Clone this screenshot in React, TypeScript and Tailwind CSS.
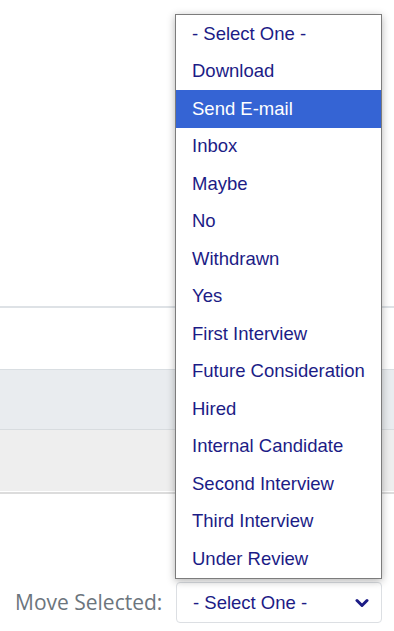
import React from "react";

const items = [
  "- Select One -",
  "Download",
  "Send E-mail",
  "Inbox",
  "Maybe",
  "No",
  "Withdrawn",
  "Yes",
  "First Interview",
  "Future Consideration",
  "Hired",
  "Internal Candidate",
  "Second Interview",
  "Third Interview",
  "Under Review",
];

export default function App() {
  return (
    <div className="relative w-[394px] h-[631px] bg-white overflow-hidden">
      <div className="h-[306px]" />
      <div className="flex flex-col">
        <div className="h-[2px] bg-[#dee2e6]" />
        <div className="h-[61px] bg-white" />
        <div className="h-[1px] bg-[#d9dee2]" />
        <div className="h-[59px] bg-[#e9ecef]" />
        <div className="h-[1px] bg-[#d8dcdf]" />
        <div className="h-[61px] bg-[#eeeeee]" />
        <div className="h-[1px] bg-white" />
        <div className="h-[2px] bg-[#dcdcdc]" />
      </div>
      <div className="mt-[88px] flex items-center pl-[15px]">
        <span
          className="w-[161px] text-[21px] leading-none text-[#6c757d]"
          style={{ fontFamily: '"Open Sans", sans-serif' }}
        >
          Move Selected:
        </span>
        <div
          className="flex h-[41px] w-[206px] items-center justify-between rounded-[4px] border border-[#dcdfe3] pl-[16px] pr-[12px] text-[18.5px] text-[#1c1c86]"
          style={{ fontFamily: '"Liberation Sans", Arial, sans-serif' }}
        >
          <span>- Select One -</span>
          <svg width="14" height="10" viewBox="0 0 14 10" fill="none">
            <path d="M2 2.5 L7 7.5 L12 2.5" stroke="#1c1c86" strokeWidth="3" strokeLinecap="round" strokeLinejoin="round" />
          </svg>
        </div>
      </div>
      <div
        className="absolute left-[175px] top-[14px] w-[207px] h-[565px] border border-[#7c7c7c] bg-white shadow-[0_2px_8px_rgba(0,0,0,0.3)] flex flex-col"
        style={{ fontFamily: '"Liberation Sans", Arial, sans-serif' }}
      >
        {items.map((it, i) => (
          <div
            key={it}
            className={
              i === 2
                ? "h-[37.5px] shrink-0 flex items-center pl-[16px] text-[18.5px] bg-[#3564d4] text-white"
                : "h-[37.5px] shrink-0 flex items-center pl-[16px] text-[18.5px] text-[#1c1c86]"
            }
          >
            {it}
          </div>
        ))}
      </div>
    </div>
  );
}
